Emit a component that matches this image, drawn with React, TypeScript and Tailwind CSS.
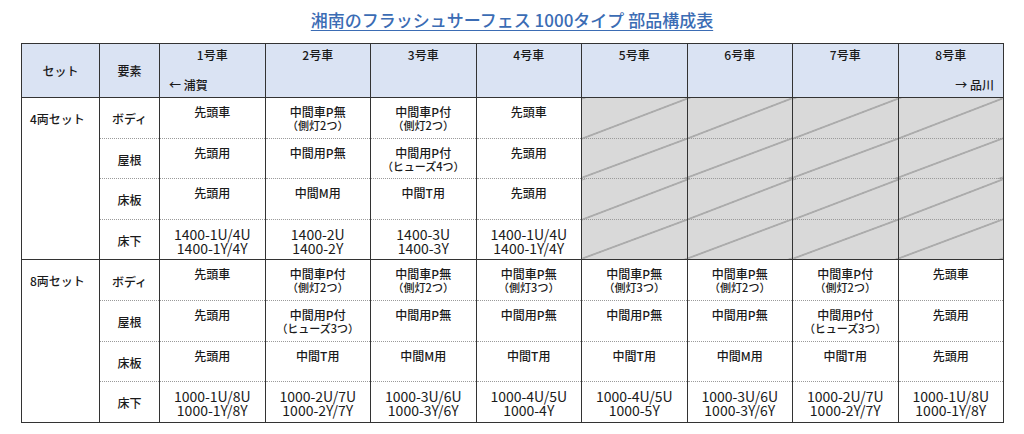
const cars = ["1号車", "2号車", "3号車", "4号車", "5号車", "6号車", "7号車", "8号車"];

type Cell = string[] | null;

type Row = { part: string; num?: boolean; cells: Cell[] };

const set4: Row[] = [
  {
    part: "ボディ",
    cells: [["先頭車"], ["中間車P無", "（側灯2つ）"], ["中間車P付", "（側灯2つ）"], ["先頭車"], null, null, null, null],
  },
  {
    part: "屋根",
    cells: [["先頭用"], ["中間用P無"], ["中間用P付", "（ヒューズ4つ）"], ["先頭用"], null, null, null, null],
  },
  {
    part: "床板",
    cells: [["先頭用"], ["中間M用"], ["中間T用"], ["先頭用"], null, null, null, null],
  },
  {
    part: "床下",
    num: true,
    cells: [
      ["1400-1U/4U", "1400-1Y/4Y"],
      ["1400-2U", "1400-2Y"],
      ["1400-3U", "1400-3Y"],
      ["1400-1U/4U", "1400-1Y/4Y"],
      null,
      null,
      null,
      null,
    ],
  },
];

const set8: Row[] = [
  {
    part: "ボディ",
    cells: [
      ["先頭車"],
      ["中間車P付", "（側灯2つ）"],
      ["中間車P無", "（側灯2つ）"],
      ["中間車P無", "（側灯3つ）"],
      ["中間車P無", "（側灯3つ）"],
      ["中間車P無", "（側灯2つ）"],
      ["中間車P付", "（側灯2つ）"],
      ["先頭車"],
    ],
  },
  {
    part: "屋根",
    cells: [
      ["先頭用"],
      ["中間用P付", "（ヒューズ3つ）"],
      ["中間用P無"],
      ["中間用P無"],
      ["中間用P無"],
      ["中間用P無"],
      ["中間用P付", "（ヒューズ3つ）"],
      ["先頭用"],
    ],
  },
  {
    part: "床板",
    cells: [["先頭用"], ["中間T用"], ["中間M用"], ["中間T用"], ["中間T用"], ["中間M用"], ["中間T用"], ["先頭用"]],
  },
  {
    part: "床下",
    num: true,
    cells: [
      ["1000-1U/8U", "1000-1Y/8Y"],
      ["1000-2U/7U", "1000-2Y/7Y"],
      ["1000-3U/6U", "1000-3Y/6Y"],
      ["1000-4U/5U", "1000-4Y"],
      ["1000-4U/5U", "1000-5Y"],
      ["1000-3U/6U", "1000-3Y/6Y"],
      ["1000-2U/7U", "1000-2Y/7Y"],
      ["1000-1U/8U", "1000-1Y/8Y"],
    ],
  },
];

const PartCell = ({ cell, num }: { cell: Cell; num?: boolean }) => {
  if (!cell) {
    // empty slot: grey with a diagonal stroke from bottom-left to top-right
    return (
      <td className="border-x border-x-[#333] bg-[#d9d9d9] bg-[linear-gradient(to_bottom_right,transparent_calc(50%_-_0.8px),#6e6e6e_50%,transparent_calc(50%_+_0.8px))]" />
    );
  }
  return (
    <td className="border-x border-x-[#333] align-top text-center pt-[7px]">
      {num ? (
        cell.map((t) => (
          <div key={t} className="text-[14px] leading-[14px] font-normal">
            {t}
          </div>
        ))
      ) : (
        <>
          <div className="text-[12px] leading-[14px]">{cell[0]}</div>
          {cell[1] && <div className="text-[11px] leading-[13px]">{cell[1]}</div>}
        </>
      )}
    </td>
  );
};

const SetRows = ({ name, rows }: { name: string; rows: Row[] }) => (
  <>
    {rows.map((row, i) => (
      <tr
        key={row.part}
        className={
          i === 0
            ? "h-[40.6px] border-t border-t-[#333]"
            : "h-[40.6px] border-t border-dotted border-t-[#9a9a9a]"
        }
      >
        {i === 0 && (
          <td rowSpan={4} className="border-x border-x-[#333] align-top pl-[8px] pt-[14px] text-[12px] leading-[13px]">
            {name}
          </td>
        )}
        <td className="border-x border-x-[#333] text-center align-middle pt-[3px] text-[12px]">{row.part}</td>
        {row.cells.map((c, j) => (
          <PartCell key={j} cell={c} num={row.num} />
        ))}
      </tr>
    ))}
  </>
);

export default function App() {
  return (
    <div className="w-[1024px] h-[434px] bg-white text-[#1a1a1a] font-medium font-['Noto_Sans_CJK_JP',sans-serif]">
      {/* Title */}
      <div className="h-[43px] pt-[8px] text-center">
        <span className="text-[17px] leading-[24px] text-[#3b6cb4] underline underline-offset-[3px] decoration-[1px]">
          湘南のフラッシュサーフェス 1000タイプ 部品構成表
        </span>
      </div>

      <div className="pl-[21px]">
        <table className="w-[983px] table-fixed border-collapse border border-[#333]">
          <colgroup>
            <col className="w-[78px]" />
            <col className="w-[60px]" />
            {cars.map((c) => (
              <col key={c} />
            ))}
          </colgroup>
          <thead>
            <tr className="h-[54px] bg-[#dae3f3] border-b border-b-[#333]">
              <th className="border-x border-x-[#333] font-medium text-[12px] align-middle">セット</th>
              <th className="border-x border-x-[#333] font-medium text-[12px] align-middle">要素</th>
              {cars.map((c, i) => (
                <th key={c} className="border-x border-x-[#333] font-medium text-[12px] leading-[13px] align-top pt-[4px]">
                  <div className="text-center">{c}</div>
                  {i === 0 && <div className="mt-[17px] pl-[9px] text-left">← 浦賀</div>}
                  {i === 7 && <div className="mt-[17px] pr-[9px] text-right">→ 品川</div>}
                </th>
              ))}
            </tr>
          </thead>
          <tbody>
            <SetRows name="4両セット" rows={set4} />
            <SetRows name="8両セット" rows={set8} />
          </tbody>
        </table>
      </div>
    </div>
  );
}
